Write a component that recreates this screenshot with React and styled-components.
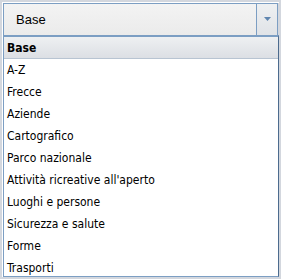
import React from 'react'
import styled, { createGlobalStyle } from 'styled-components'

const GlobalStyle = createGlobalStyle`
  html, body {
    margin: 0;
    padding: 0;
    background: #d3d7de;
  }
`

const items = [
    'A-Z',
    'Frecce',
    'Aziende',
    'Cartografico',
    'Parco nazionale',
    "Attività ricreative all'aperto",
    'Luoghi e persone',
    'Sicurezza e salute',
    'Forme',
    'Trasporti',
]

const Frame = styled.div`
    width: 281px;
    height: 279px;
    box-sizing: border-box;
    padding: 2px 2px 2px 2px;
`

const Inner = styled.div`
    border-top: 1px solid #ffffff;
    border-left: 1px solid #ffffff;
    display: flex;
    flex-direction: column;
    width: 276px;
`

const Combo = styled.div`
    display: flex;
    height: 32px;
    box-sizing: border-box;
    border: 1px solid #7c9ec3;
    border-bottom: none;
    background: linear-gradient(#f3f3f3, #ebebeb);
    width: 275px;
`

const ComboLabel = styled.div`
    flex: 1;
    display: flex;
    align-items: center;
    padding-left: 12px;
    font-family: "Liberation Sans", Arial, sans-serif;
    font-size: 13px;
    color: #000;
`

const ArrowButton = styled.div`
    width: 20px;
    border-left: 1px solid #7c9ec3;
    background: linear-gradient(#eef0f2, #e0e3e7);
    display: flex;
    align-items: center;
    justify-content: center;
    padding-bottom: 2px;
`

const List = styled.div`
    border: 1px solid #7c9ec3;
    border-top: 2px solid #7c9ec3;
    border-right: 1px solid #4c6b8e;
    background: #fff;
    height: 242px;
    box-sizing: border-box;
    width: 276px;
    font-family: "DejaVu Sans Condensed", "DejaVu Sans", Verdana, sans-serif;
    font-stretch: condensed;
    font-size: 12px;
    color: #000;
`

const Header = styled.div`
    height: 21px;
    display: flex;
    align-items: center;
    padding-left: 3px;
    font-weight: bold;
    background: linear-gradient(#eef0f2, #dcdfe4);
    border-bottom: 1px solid #b8c4d2;
`

const Row = styled.div`
    height: 22px;
    display: flex;
    align-items: center;
    padding-left: 3px;
    white-space: nowrap;
`

const App = () => {
    return (
        <>
            <GlobalStyle />
            <Frame>
                <Inner>
                    <Combo>
                        <ComboLabel>Base</ComboLabel>
                        <ArrowButton>
                            <svg width="7" height="4" viewBox="0 0 7 4">
                                <path d="M0 0 L7 0 L3.5 4 Z" fill="#5f86b0" />
                            </svg>
                        </ArrowButton>
                    </Combo>
                    <List>
                        <Header>Base</Header>
                        {items.map((name) => (
                            <Row key={name}>{name}</Row>
                        ))}
                    </List>
                </Inner>
            </Frame>
        </>
    )
}

export default App
